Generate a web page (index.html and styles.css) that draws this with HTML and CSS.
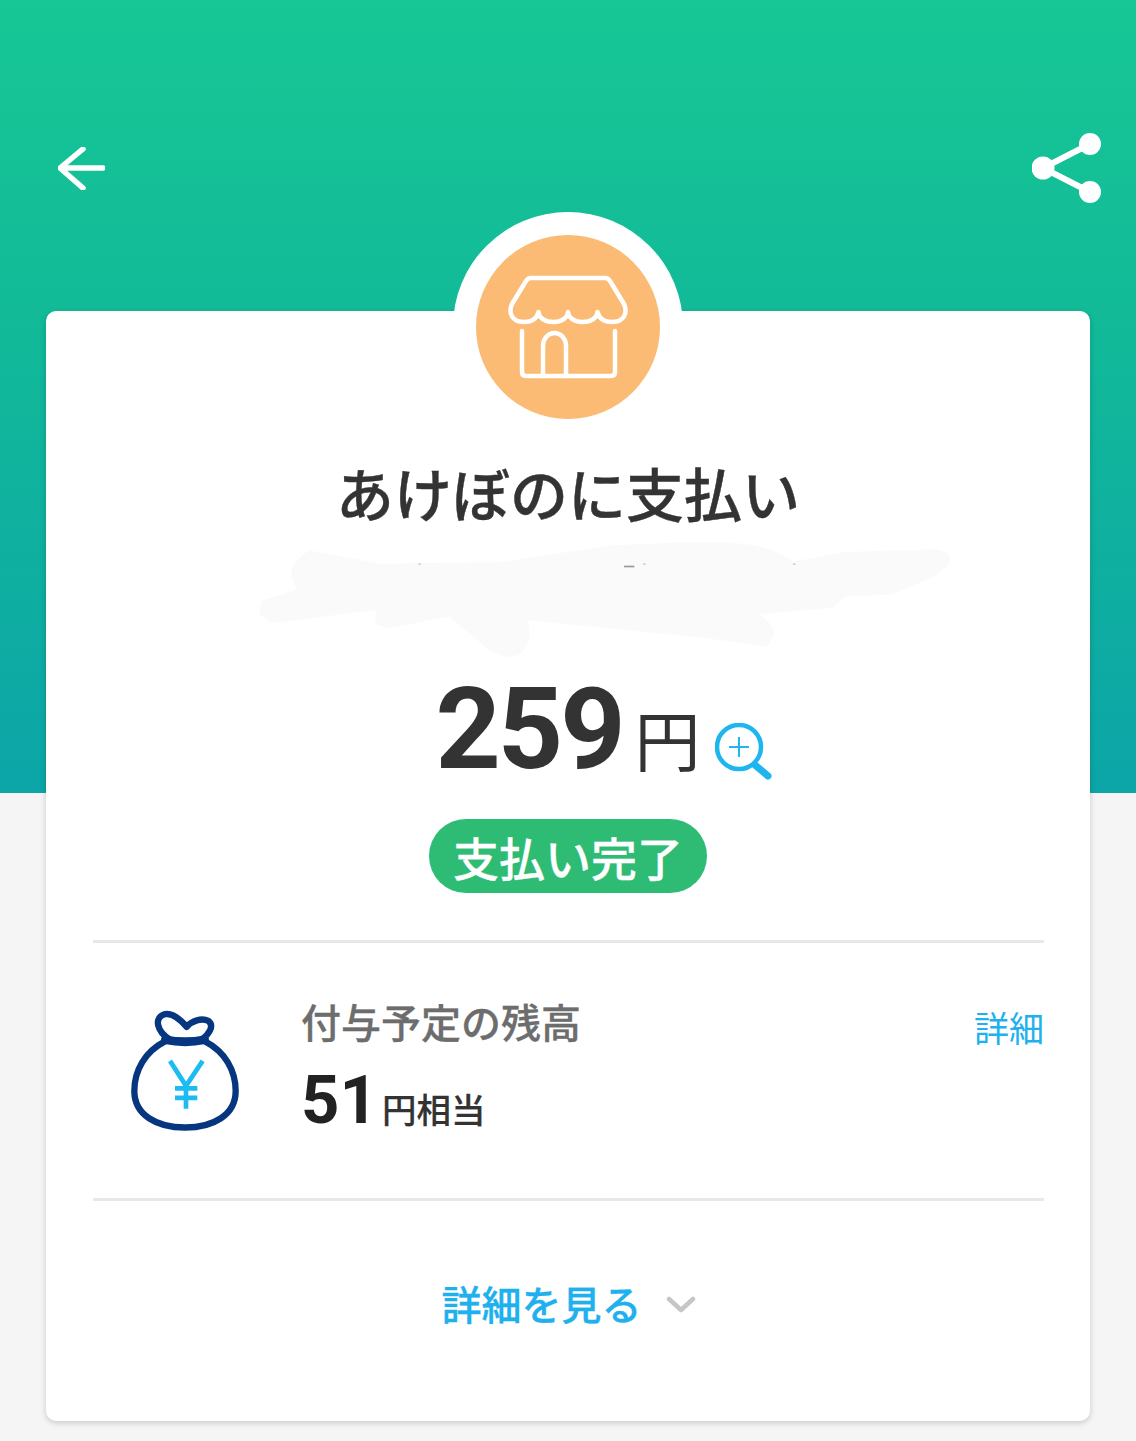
FILE: index.html
```html
<!DOCTYPE html>
<html lang="ja">
<head>
    <meta charset="utf-8">
    <title>支払い完了</title>
    <link rel="stylesheet" href="styles.css">
</head>
<body>
    <header class="top-bar">
        <svg class="back-icon" viewBox="58 147 47 43" aria-hidden="true">
            <path d="M103 168H61M83 149L60 168L83 188"/>
        </svg>
        <svg class="share-icon" viewBox="1032 133 70 70" aria-hidden="true">
            <path d="M1043 168L1090 144M1043 168L1090 192"/>
            <circle cx="1043" cy="168" r="11.5"/>
            <circle cx="1090" cy="144" r="11"/>
            <circle cx="1090" cy="192" r="11"/>
        </svg>
    </header>

    <main class="card">
        <div class="avatar">
            <svg class="store-icon" viewBox="476 235 184 184" aria-hidden="true">
                <circle class="store-bg" cx="568" cy="327" r="92"/>
                <path d="M531 278H605Q608 278 610 281L624 304C628 313 624 322 612 322C604 322 599 318 597.5 312A14.75 10 0 0 1 568 312A14.75 10 0 0 1 538.5 312C537 318 532 322 524 322C512 322 508 313 512 304L526 281Q528 278 531 278Z"/>
                <path d="M522 331V372Q522 376 526 376H611Q615 376 615 372V331"/>
                <path d="M543 376V346A11.5 13 0 0 1 566 346V376"/>
            </svg>
        </div>

        <h1 class="title">あけぼのに支払い</h1>

        <svg class="smudge" viewBox="-417 36 2243 345" preserveAspectRatio="none" aria-hidden="true">
            <path d="M150 65L300 105L560 100L800 50L1000 38Q1140 40 1185 100L1300 70L1490 62Q1530 70 1520 100L1490 135L1400 190L1300 195L1270 230L1100 250Q1150 280 1140 320L1130 345L1000 320L610 265Q630 320 600 370L575 378L540 360L450 255L320 290L295 280L295 235L70 275L45 250L50 215L130 180Q90 120 150 65Z"/>
            <rect class="smudge-mark" x="825" y="107" width="22" height="5"/>
            <rect class="smudge-dot" x="383" y="100" width="5" height="5"/>
            <rect class="smudge-dot" x="866" y="100" width="5" height="5"/>
            <rect class="smudge-dot" x="1188" y="100" width="5" height="5"/>
        </svg>

        <div class="amount">
            <span class="amount-value">259</span>
            <span class="amount-unit">円</span>
            <svg class="zoom-icon" viewBox="715 723 57 57" aria-hidden="true">
                <circle cx="739" cy="747" r="22"/>
                <path class="zoom-plus" d="M729 747H749M739 737V757"/>
                <path class="zoom-handle" d="M755 765L768 776"/>
            </svg>
        </div>

        <div class="status"><span class="status-pill">支払い完了</span></div>

        <section class="reward">
            <svg class="bag-icon" viewBox="120 60 330 360" preserveAspectRatio="none" aria-hidden="true">
                <path d="M225 155C165 185 133 240 133 300C133 370 200 407 285 407C370 407 437 370 437 300C437 240 405 185 345 155"/>
                <path class="bag-neck" d="M226 150Q285 162 344 150"/>
                <path d="M240 150C200 125 190 85 225 75C250 70 275 95 290 112C305 95 335 85 355 95C375 110 355 135 335 150"/>
                <path class="bag-yen" d="M240 212L288 285L338 212M288 285V352M255 292H322M255 320H322"/>
            </svg>
            <div class="reward-text">
                <div class="reward-label">付与予定の残高</div>
                <div class="reward-amount">
                    <span class="reward-value">51</span>
                    <span class="reward-unit">円相当</span>
                </div>
            </div>
            <a class="reward-link">詳細</a>
        </section>

        <div class="more">
            <span class="more-label">詳細を見る</span>
            <svg class="chevron" viewBox="0 0 30 18" aria-hidden="true">
                <path d="M3 3L15 14L27 3"/>
            </svg>
        </div>
    </main>
</body>
</html>
```

FILE: styles.css
```css
html, body {
    margin: 0;
    padding: 0;
}

body {
    min-height: 1441px;
    font-family: "Noto Sans CJK JP", "Roboto", sans-serif;
    color: #333;
    background-color: #f5f5f5;
    background-image: linear-gradient(#17c795, #12ba98 40%, #0ca5a8);
    background-size: 100% 793px;
    background-repeat: no-repeat;
}

.top-bar {
    display: flex;
    justify-content: space-between;
    align-items: center;
    height: 70px;
    padding: 133px 34px 0 58px;
}

.back-icon {
    width: 47px;
    height: 43px;
    fill: none;
    stroke: #fff;
    stroke-width: 5.5;
    stroke-linecap: round;
    stroke-linejoin: round;
}

.share-icon {
    width: 70px;
    height: 70px;
    fill: #fff;
    stroke: #fff;
}

.share-icon path {
    stroke-width: 6;
}

.share-icon circle {
    stroke: none;
}

.card {
    height: 1110px;
    margin: 108px 46px 0;
    background: #fff;
    border-radius: 10px;
    box-shadow: 0 2px 6px rgba(0, 0, 0, 0.18);
}

.avatar {
    display: flex;
    justify-content: center;
    align-items: center;
    width: 230px;
    height: 230px;
    margin: 0 auto;
    position: relative;
    top: -99px;
    margin-bottom: -99px;
    border-radius: 50%;
    background: #fff;
}

.store-icon {
    width: 184px;
    height: 184px;
    fill: none;
    stroke: #fff;
    stroke-width: 4.5;
    stroke-linejoin: round;
    stroke-linecap: round;
}

.store-bg {
    fill: #fbbb74;
    stroke: none;
}

.title {
    margin: 10px 0 0;
    font-size: 58px;
    font-weight: 500;
    line-height: 80px;
    text-align: center;
    color: #333;
    -webkit-text-stroke: 0.4px #333;
}

.smudge {
    display: block;
    width: 100%;
    height: 115px;
    margin-top: 10px;
}

.smudge path {
    fill: #fafafa;
    stroke: #fafafa;
    stroke-width: 8;
    stroke-linejoin: round;
}

.smudge-mark {
    fill: #999;
}

.smudge-dot {
    fill: #ccc;
}

.amount {
    display: flex;
    justify-content: center;
    align-items: flex-end;
    height: 130px;
    margin-top: 7px;
}

.amount-value {
    font-family: "Roboto", sans-serif;
    font-size: 114px;
    font-weight: 700;
    line-height: 130px;
    letter-spacing: -3px;
}

.amount-unit {
    margin-left: 12px;
    margin-bottom: 7px;
    font-size: 66px;
    font-weight: 400;
    line-height: 100px;
}

.zoom-icon {
    width: 57px;
    height: 57px;
    margin-left: 14px;
    margin-right: -71px;
    margin-bottom: 14px;
    fill: none;
    stroke: #1fb6f0;
    stroke-width: 4.5;
}

.zoom-plus {
    stroke-width: 2;
}

.zoom-handle {
    stroke-width: 7;
    stroke-linecap: round;
}

.status {
    display: flex;
    justify-content: center;
    margin-top: 25px;
}

.status-pill {
    width: 278px;
    height: 74px;
    border-radius: 37px;
    background: #2ebb73;
    color: #fff;
    font-size: 46px;
    font-weight: 500;
    line-height: 74px;
    text-align: center;
    -webkit-text-stroke: 0.3px #fff;
}

.reward {
    display: flex;
    align-items: flex-start;
    height: 255px;
    margin: 47px 46px 0 47px;
    border-top: 3px solid #e8e8e8;
    border-bottom: 3px solid #e8e8e8;
}

.bag-icon {
    flex: none;
    width: 110px;
    height: 123px;
    margin: 66px 0 0 37px;
    fill: none;
    stroke: #06367f;
    stroke-width: 19;
    stroke-linecap: round;
    stroke-linejoin: round;
}

.bag-neck {
    stroke-width: 26;
}

.bag-yen {
    stroke: #1dbcf0;
    stroke-width: 14;
    stroke-linecap: butt;
    stroke-linejoin: miter;
}

.reward-text {
    flex: 1;
    margin: 50px 0 0 61px;
}

.reward-label {
    font-size: 40px;
    font-weight: 500;
    line-height: 56px;
    color: #6d6d6d;
    -webkit-text-stroke: 0.3px #6d6d6d;
}

.reward-amount {
    display: flex;
    align-items: baseline;
    margin-top: 15px;
    line-height: 72px;
}

.reward-value {
    font-family: "Roboto", sans-serif;
    font-size: 67px;
    font-weight: 700;
    color: #222;
}

.reward-unit {
    margin-left: 4px;
    font-size: 34.5px;
    font-weight: 500;
    -webkit-text-stroke: 0.2px #333;
}

.reward-link {
    margin-top: 60px;
    font-size: 35px;
    line-height: 48px;
    color: #1fb0ee;
}

.more {
    display: flex;
    justify-content: center;
    align-items: center;
    gap: 24px;
    margin-top: 72px;
    padding-left: 1px;
}

.more-label {
    margin-bottom: 4px;
    font-size: 40px;
    font-weight: 500;
    line-height: 60px;
    color: #1fb0ee;
    -webkit-text-stroke: 0.3px #1fb0ee;
}

.chevron {
    width: 30px;
    height: 18px;
    fill: none;
    stroke: #c6c6c6;
    stroke-width: 4.5;
    stroke-linecap: round;
    stroke-linejoin: round;
}
```
